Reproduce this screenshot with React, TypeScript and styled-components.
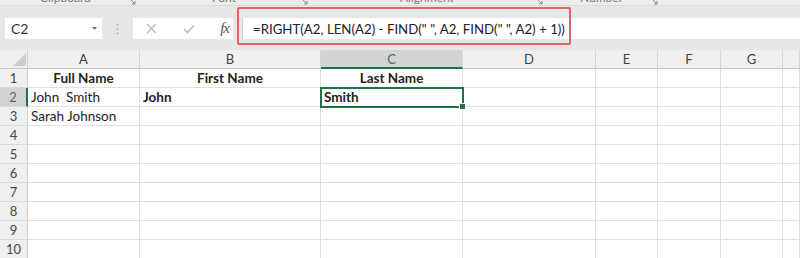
import React from 'react';
import styled, { createGlobalStyle } from 'styled-components';

const green = '#217346';

const GlobalStyle = createGlobalStyle`
  body {
    margin: 0;
    background: #fff;
    font-family: Lato, "Liberation Sans", sans-serif;
  }
`;

const Window = styled.div`
  width: 800px;
  height: 258px;
  overflow: hidden;
  display: flex;
  flex-direction: column;
  background: #fff;
`;

/* ribbon group captions, cut off at the top of the shot */
const RibbonStrip = styled.div`
  flex: none;
  height: 5px;
  display: flex;
  overflow: hidden;
  background: #ededed;
  border-bottom: 1px solid #dcdcdc;
`;

const RibbonGroup = styled.div<{ $width: number; $labelLeft: number }>`
  flex: none;
  width: ${(p) => p.$width}px;
  padding-left: ${(p) => p.$labelLeft}px;
  box-sizing: border-box;
  display: flex;
  align-items: flex-start;
`;

const GroupLabel = styled.span`
  margin-top: -8px;
  font-size: 12px;
  line-height: 12px;
  color: #7c7c7c;
  white-space: nowrap;
`;

const Launcher = styled.svg`
  margin-left: auto;
  margin-right: 4px;
  margin-top: -2px;
  flex: none;
`;

const FormulaArea = styled.div`
  flex: none;
  position: relative;
  height: 44px;
  box-sizing: border-box;
  padding: 12px 0 0 5px;
  display: flex;
  align-items: flex-start;
  background: #e7e7e7;
`;

const NameBox = styled.div`
  flex: none;
  width: 97px;
  height: 21px;
  box-sizing: border-box;
  padding: 0 5px 0 6px;
  display: flex;
  align-items: center;
  justify-content: space-between;
  background: #fff;
  font-size: 14px;
  color: #333;
`;

const Grip = styled.div`
  flex: none;
  width: 31px;
  height: 21px;
  display: flex;
  align-items: center;
  justify-content: center;
`;

const EditButtons = styled.div`
  flex: none;
  width: 100px;
  height: 21px;
  box-sizing: border-box;
  padding: 0 4px 0 13px;
  display: flex;
  align-items: center;
  justify-content: space-between;
  background: #fff;
`;

const FxLabel = styled.span`
  font-family: "Liberation Serif", serif;
  font-style: italic;
  font-size: 15px;
  color: #555;
  letter-spacing: -1px;
`;

const FormulaInput = styled.div`
  flex: 1;
  height: 21px;
  margin-left: 9px;
  box-sizing: border-box;
  padding-left: 10px;
  display: flex;
  align-items: center;
  background: #fff;
  border-left: 1px solid #d4d4d4;
  font-size: 13.25px;
  color: #222;
  white-space: pre;
`;

/* annotation drawn over the formula bar */
const Highlight = styled.div`
  position: absolute;
  left: 237px;
  top: 1px;
  width: 334px;
  height: 38px;
  box-sizing: border-box;
  border: 2px solid #e06464;
  border-radius: 2px;
`;

const Sheet = styled.div`
  display: grid;
  grid-template-columns: 28px 112px 181px 142px 133px 62px 63px 62px 17px;
  grid-auto-rows: 19px;
`;

const Corner = styled.div`
  background: #efefef;
  border-right: 1px solid #d0d0d0;
  border-bottom: 1px solid #c8c8c8;
  display: flex;
  align-items: flex-end;
  justify-content: flex-end;
  padding: 0 1px 2px 0;
`;

const ColHeader = styled.div<{ $active?: boolean }>`
  display: flex;
  align-items: center;
  justify-content: center;
  font-size: 13px;
  background: ${(p) => (p.$active ? '#d3d3d3' : '#efefef')};
  color: ${(p) => (p.$active ? '#4f6a58' : '#444')};
  border-right: 1px solid #d6d6d6;
  border-bottom: ${(p) => (p.$active ? `2px solid ${green}` : '1px solid #c8c8c8')};
`;

const RowHeader = styled.div<{ $active?: boolean }>`
  display: flex;
  align-items: center;
  justify-content: center;
  font-size: 13px;
  background: ${(p) => (p.$active ? '#d3d3d3' : '#efefef')};
  color: ${(p) => (p.$active ? '#4f6a58' : '#444')};
  border-right: ${(p) => (p.$active ? `2px solid ${green}` : '1px solid #d0d0d0')};
  border-bottom: 1px solid #dadada;
`;

const Cell = styled.div<{ $bold?: boolean; $center?: boolean; $selected?: boolean }>`
  position: relative;
  display: flex;
  align-items: center;
  justify-content: ${(p) => (p.$center ? 'center' : 'flex-start')};
  padding-left: ${(p) => (p.$center ? 0 : 3)}px;
  font-size: 13.5px;
  font-weight: ${(p) => (p.$bold ? 700 : 400)};
  color: #222;
  white-space: pre;
  border-right: 1px solid #e0e0e0;
  border-bottom: 1px solid #e0e0e0;
  ${(p) =>
    p.$selected &&
    `
    outline: 2px solid ${green};
    outline-offset: -1px;
    z-index: 1;
    &::after {
      content: '';
      position: absolute;
      right: -4px;
      bottom: -4px;
      width: 5px;
      height: 5px;
      background: ${green};
      border: 1px solid #fff;
    }
  `}
`;

type CellData = { text: string; bold?: boolean; center?: boolean };

const columns = ['A', 'B', 'C', 'D', 'E', 'F', 'G', ''];
const activeCol = 2;
const activeRow = 2;

const data: Record<number, CellData[]> = {
  1: [
    { text: 'Full Name', bold: true, center: true },
    { text: 'First Name', bold: true, center: true },
    { text: 'Last Name', bold: true, center: true },
  ],
  2: [{ text: 'John  Smith' }, { text: 'John', bold: true }, { text: 'Smith', bold: true }],
  3: [{ text: 'Sarah Johnson' }],
};

const ribbonGroups = [
  { label: 'Clipboard', width: 140, left: 40 },
  { label: 'Font', width: 172, left: 72 },
  { label: 'Alignment', width: 235, left: 88 },
  { label: 'Number', width: 115, left: 33 },
];

const App: React.FC = () => {
  const rows = Array.from({ length: 10 }, (_, i) => i + 1);

  return (
    <>
      <GlobalStyle />
      <Window>
        <RibbonStrip>
          {ribbonGroups.map((g) => (
            <RibbonGroup key={g.label} $width={g.width} $labelLeft={g.left}>
              <GroupLabel>{g.label}</GroupLabel>
              <Launcher width="7" height="7" viewBox="0 0 7 7">
                <path d="M1 1 L6 6 M3 6 H6 V3" stroke="#8a8a8a" strokeWidth="1" fill="none" />
              </Launcher>
            </RibbonGroup>
          ))}
        </RibbonStrip>

        <FormulaArea>
          <NameBox>
            <span>C2</span>
            <svg width="5" height="3" viewBox="0 0 5 3">
              <path d="M0 0 H5 L2.5 3 Z" fill="#777" />
            </svg>
          </NameBox>
          <Grip>
            <svg width="3" height="12" viewBox="0 0 3 12">
              <circle cx="1.5" cy="1.5" r="1" fill="#b0b0b0" />
              <circle cx="1.5" cy="6" r="1" fill="#b0b0b0" />
              <circle cx="1.5" cy="10.5" r="1" fill="#b0b0b0" />
            </svg>
          </Grip>
          <EditButtons>
            <svg width="11" height="11" viewBox="0 0 11 11">
              <path d="M1 1 L10 10 M10 1 L1 10" stroke="#b4b4b4" strokeWidth="1.2" />
            </svg>
            <svg width="12" height="10" viewBox="0 0 12 10">
              <path d="M1 5 L4.5 8.5 L11 1.5" stroke="#b4b4b4" strokeWidth="1.3" fill="none" />
            </svg>
            <FxLabel>fx</FxLabel>
          </EditButtons>
          <FormulaInput>{'=RIGHT(A2, LEN(A2) - FIND(" ", A2, FIND(" ", A2) + 1))'}</FormulaInput>
          <Highlight />
        </FormulaArea>

        <Sheet>
          <Corner>
            <svg width="13" height="13" viewBox="0 0 13 13">
              <path d="M13 0 V13 H0 Z" fill="#cdcdcd" />
            </svg>
          </Corner>
          {columns.map((c, i) => (
            <ColHeader key={`h${i}`} $active={i === activeCol}>
              {c}
            </ColHeader>
          ))}
          {rows.map((r) => (
            <React.Fragment key={r}>
              <RowHeader $active={r === activeRow}>{r}</RowHeader>
              {columns.map((_, ci) => {
                const d = data[r]?.[ci];
                return (
                  <Cell
                    key={ci}
                    $bold={d?.bold}
                    $center={d?.center}
                    $selected={r === activeRow && ci === activeCol}
                  >
                    {d?.text ?? ''}
                  </Cell>
                );
              })}
            </React.Fragment>
          ))}
        </Sheet>
      </Window>
    </>
  );
};

export default App;
